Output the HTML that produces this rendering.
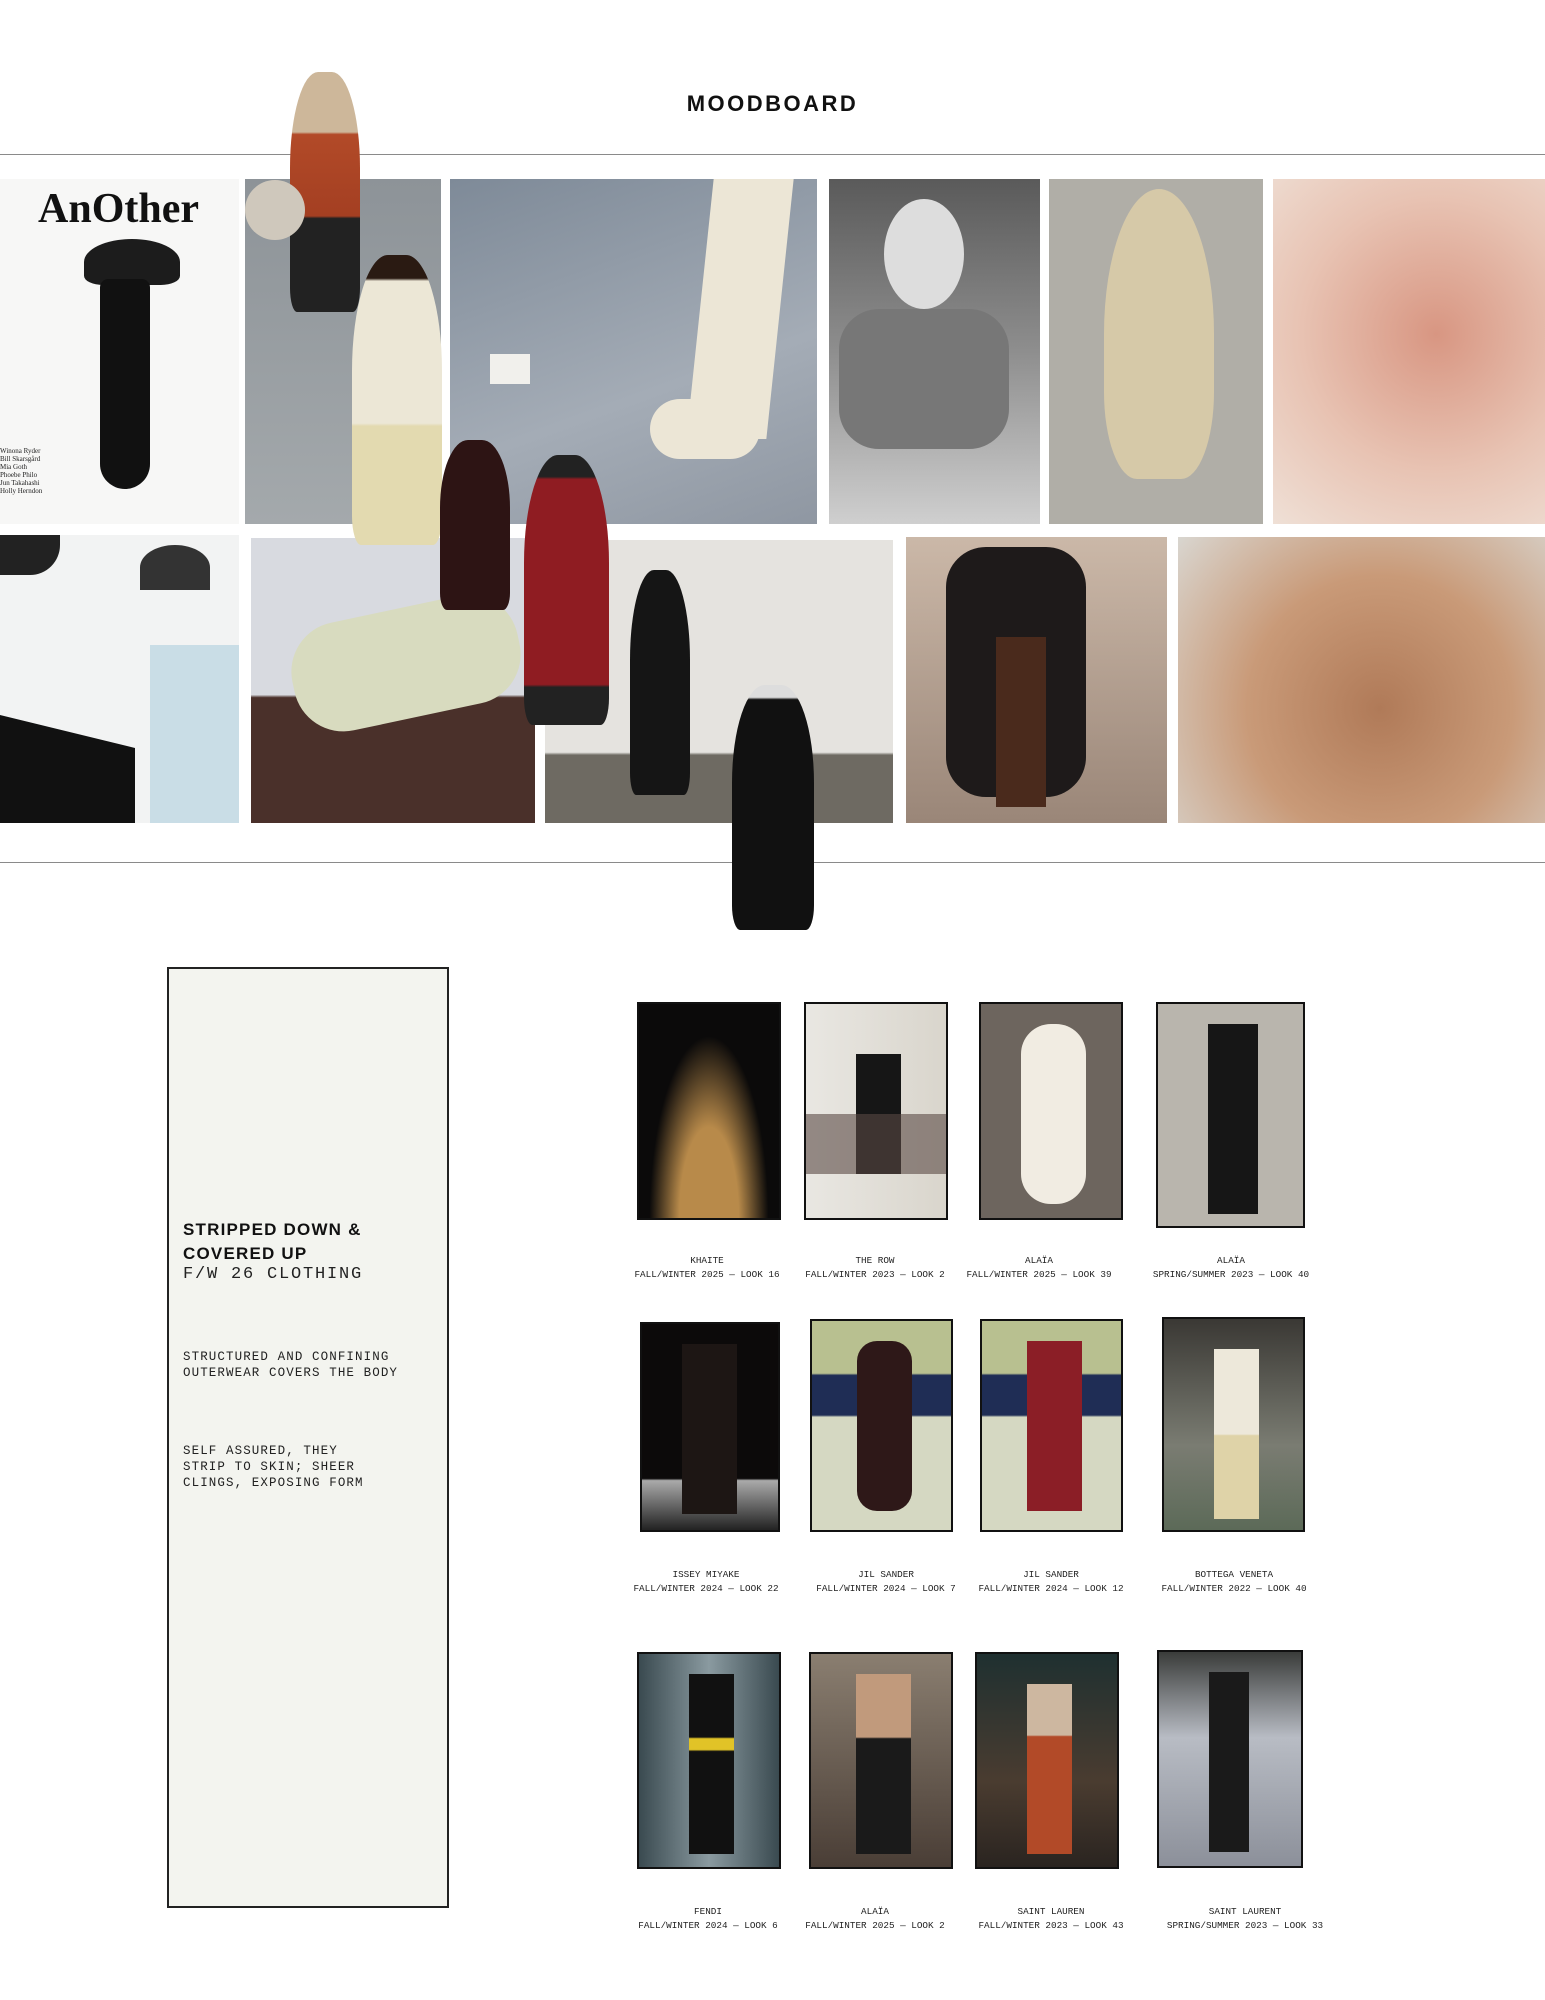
<!DOCTYPE html>
<html><head><meta charset="utf-8"><style>
body{margin:0;background:#fff;width:1545px;height:2000px;position:relative;overflow:hidden;font-family:"Liberation Sans",sans-serif}
.a{position:absolute}
.hl{position:absolute;left:0;width:1545px;height:1px;background:#8a8a8a}
.im{position:absolute;overflow:hidden}
.th{position:absolute;border:2px solid #111;box-sizing:border-box;overflow:hidden}
.cap{position:absolute;font-family:"Liberation Mono",monospace;font-size:9.3px;color:#222;text-align:center;line-height:14px;white-space:nowrap;transform:translateX(-50%)}
.mono{font-family:"Liberation Mono",monospace;color:#222;letter-spacing:1.1px}
.fig{position:absolute;border-radius:40% 40% 10% 10%}
</style></head><body>
<div class="a" style="left:0;width:1545px;top:91px;text-align:center;font-weight:bold;font-size:22px;letter-spacing:2.5px;color:#111">MOODBOARD</div>
<div class="hl" style="top:154px"></div>
<div class="hl" style="top:862px"></div>

<!-- top row -->
<div class="im" style="left:0;top:179px;width:239px;height:345px;background:#f7f7f6">
 <div class="a" style="left:38px;top:6px;font-family:'Liberation Serif',serif;font-size:42px;font-weight:bold;color:#111">AnOther</div>
 <div class="a" style="left:84px;top:60px;width:96px;height:46px;background:#1c1c1c;border-radius:50% 50% 20% 20%"></div>
 <div class="a" style="left:100px;top:100px;width:50px;height:210px;background:#111;border-radius:10px 10px 30px 30px"></div>
 <div class="a mono" style="left:0;top:268px;font-family:'Liberation Serif',serif;font-size:7px;line-height:8px;letter-spacing:0">Winona Ryder<br>Bill Skarsgård<br>Mia Goth<br>Phoebe Philo<br>Jun Takahashi<br>Holly Herndon</div>
</div>
<div class="im" style="left:245px;top:179px;width:196px;height:345px;background:linear-gradient(#8d9398,#a4a9ac)"></div>
<div class="im" style="left:450px;top:179px;width:367px;height:345px;background:linear-gradient(160deg,#7e8a98,#a4acb6 60%,#8f97a2)">
 <div class="a" style="left:250px;top:0;width:80px;height:260px;background:#ece6d6;transform:skewX(-6deg)"></div>
 <div class="a" style="left:200px;top:220px;width:110px;height:60px;background:#ece6d6;border-radius:30px"></div>
 <div class="a" style="left:40px;top:175px;width:40px;height:30px;background:#f1f0ec"></div>
</div>
<div class="im" style="left:829px;top:179px;width:211px;height:345px;background:linear-gradient(#5a5a5a,#8e8e8e 50%,#cfcfcf)">
 <div class="a" style="left:55px;top:20px;width:80px;height:110px;background:#ddd;border-radius:50%"></div>
 <div class="a" style="left:10px;top:130px;width:170px;height:140px;background:#777;border-radius:40px"></div>
</div>
<div class="im" style="left:1049px;top:179px;width:214px;height:345px;background:#b0aea7">
 <div class="a" style="left:55px;top:10px;width:110px;height:290px;background:#d6c9a8;border-radius:50% 50% 30% 30%"></div>
</div>
<div class="im" style="left:1273px;top:179px;width:272px;height:345px;background:radial-gradient(circle at 60% 45%,#d89682,#e8c3b3 55%,#efe0d6)"></div>

<!-- second row -->
<div class="im" style="left:0;top:535px;width:239px;height:288px;background:#f2f3f3">
 <div class="a" style="left:0;top:180px;width:135px;height:110px;background:#111;clip-path:polygon(0 0,100% 30%,100% 100%,0 100%)"></div>
 <div class="a" style="left:150px;top:110px;width:89px;height:178px;background:#c9dde6"></div>
 <div class="a" style="left:0;top:0;width:60px;height:40px;background:#222;border-radius:0 0 30px 0"></div>
 <div class="a" style="left:140px;top:10px;width:70px;height:45px;background:#333;border-radius:50% 50% 0 0"></div>
</div>
<div class="im" style="left:251px;top:538px;width:284px;height:285px;background:linear-gradient(#d8dae0 55%,#4a302a 56%)">
 <div class="a" style="left:40px;top:70px;width:230px;height:110px;background:#d8dbbf;border-radius:50px;transform:rotate(-12deg)"></div>
</div>
<div class="im" style="left:545px;top:540px;width:348px;height:283px;background:linear-gradient(#e5e3df 75%,#6e6a62 76%)"></div>
<div class="im" style="left:906px;top:537px;width:261px;height:286px;background:linear-gradient(#cbb8a8,#9a8678)">
 <div class="a" style="left:40px;top:10px;width:140px;height:250px;background:#1e1a1a;border-radius:40px"></div>
 <div class="a" style="left:90px;top:100px;width:50px;height:170px;background:#4a2a1c"></div>
</div>
<div class="im" style="left:1178px;top:537px;width:367px;height:286px;background:radial-gradient(circle at 55% 60%,#b07a58,#c99a78 50%,#d9d6d0)"></div>

<!-- cutout figures -->
<div class="fig" style="left:290px;top:72px;width:70px;height:240px;background:linear-gradient(#cdb79a 25%,#b24a28 26%,#a43f22 60%,#222 61%)"></div>
<div class="fig" style="left:245px;top:180px;width:60px;height:60px;background:#cfc8bc;border-radius:50%"></div>
<div class="fig" style="left:352px;top:255px;width:90px;height:290px;background:linear-gradient(#2a1a12 8%,#ece7d6 9%,#ece7d6 58%,#e3dab0 59%)"></div>
<div class="fig" style="left:440px;top:440px;width:70px;height:170px;background:#2d1414"></div>
<div class="fig" style="left:524px;top:455px;width:85px;height:270px;background:linear-gradient(#222 8%,#8f1c22 9%,#8f1c22 85%,#222 86%)"></div>
<div class="fig" style="left:732px;top:685px;width:82px;height:245px;background:linear-gradient(#ddd 5%,#111 6%)"></div>
<div class="fig" style="left:630px;top:570px;width:60px;height:225px;background:#151515"></div>

<!-- text box -->
<div class="a" style="left:167px;top:967px;width:282px;height:941px;background:#f3f4ef;border:2px solid #222;box-sizing:border-box"></div>
<div class="a" style="left:183px;top:1218px;font-weight:bold;font-size:17px;letter-spacing:1.2px;line-height:24px;color:#111">STRIPPED DOWN &amp;<br>COVERED UP</div>
<div class="a mono" style="left:183px;top:1265px;font-size:17px;letter-spacing:1.8px">F/W 26 CLOTHING</div>
<div class="a mono" style="left:183px;top:1349px;font-size:12.5px;line-height:16px">STRUCTURED AND CONFINING<br>OUTERWEAR COVERS THE BODY</div>
<div class="a mono" style="left:183px;top:1443px;font-size:12.5px;line-height:16px">SELF ASSURED, THEY<br>STRIP TO SKIN; SHEER<br>CLINGS, EXPOSING FORM</div>

<!-- grid row 1 -->
<div class="th" style="left:637px;top:1002px;width:144px;height:218px;background:radial-gradient(ellipse at 50% 100%,#b88a4a 30%,#0b0a0a 60%)"></div>
<div class="th" style="left:804px;top:1002px;width:144px;height:218px;background:linear-gradient(90deg,#e9e7e2,#d9d5cc)"><div class="a" style="left:50px;top:50px;width:45px;height:120px;background:#161616"></div><div class="a" style="left:0;top:110px;width:140px;height:60px;background:#5a4a44;opacity:.6"></div></div>
<div class="th" style="left:979px;top:1002px;width:144px;height:218px;background:#6d655e"><div class="a" style="left:40px;top:20px;width:65px;height:180px;background:#f1ece2;border-radius:30px"></div></div>
<div class="th" style="left:1156px;top:1002px;width:149px;height:226px;background:#b9b5ad"><div class="a" style="left:50px;top:20px;width:50px;height:190px;background:#161616"></div></div>
<div class="cap" style="left:707px;top:1254px">KHAITE<br>FALL/WINTER 2025 — LOOK 16</div>
<div class="cap" style="left:875px;top:1254px">THE ROW<br>FALL/WINTER 2023 — LOOK 2</div>
<div class="cap" style="left:1039px;top:1254px">ALAÏA<br>FALL/WINTER 2025 — LOOK 39</div>
<div class="cap" style="left:1231px;top:1254px">ALAÏA<br>SPRING/SUMMER 2023 — LOOK 40</div>

<!-- grid row 2 -->
<div class="th" style="left:640px;top:1322px;width:140px;height:210px;background:linear-gradient(#0c0a0a 75%,#aaa 76%,#222)"><div class="a" style="left:40px;top:20px;width:55px;height:170px;background:#1d1614"></div></div>
<div class="th" style="left:810px;top:1319px;width:143px;height:213px;background:linear-gradient(#b8c090 25%,#1f2d55 26%,#1f2d55 45%,#d5d8c2 46%)"><div class="a" style="left:45px;top:20px;width:55px;height:170px;background:#2e1818;border-radius:20px"></div></div>
<div class="th" style="left:980px;top:1319px;width:143px;height:213px;background:linear-gradient(#b8c090 25%,#1f2d55 26%,#1f2d55 45%,#d5d8c2 46%)"><div class="a" style="left:45px;top:20px;width:55px;height:170px;background:#8b1e26"></div></div>
<div class="th" style="left:1162px;top:1317px;width:143px;height:215px;background:linear-gradient(#3a3834,#7a7c72 60%,#5c6a58)"><div class="a" style="left:50px;top:30px;width:45px;height:170px;background:linear-gradient(#ede8da 50%,#dfd3a8 51%)"></div></div>
<div class="cap" style="left:706px;top:1568px">ISSEY MIYAKE<br>FALL/WINTER 2024 — LOOK 22</div>
<div class="cap" style="left:886px;top:1568px">JIL SANDER<br>FALL/WINTER 2024 — LOOK 7</div>
<div class="cap" style="left:1051px;top:1568px">JIL SANDER<br>FALL/WINTER 2024 — LOOK 12</div>
<div class="cap" style="left:1234px;top:1568px">BOTTEGA VENETA<br>FALL/WINTER 2022 — LOOK 40</div>

<!-- grid row 3 -->
<div class="th" style="left:637px;top:1652px;width:144px;height:217px;background:linear-gradient(90deg,#3a4a50,#8a9aa0 50%,#3a4a50)"><div class="a" style="left:50px;top:20px;width:45px;height:180px;background:linear-gradient(#111 35%,#e1c327 36%,#e1c327 42%,#111 43%)"></div></div>
<div class="th" style="left:809px;top:1652px;width:144px;height:217px;background:linear-gradient(#8a7e70,#4a3e36)"><div class="a" style="left:45px;top:20px;width:55px;height:180px;background:linear-gradient(#c19a7c 35%,#1a1a1a 36%)"></div></div>
<div class="th" style="left:975px;top:1652px;width:144px;height:217px;background:linear-gradient(#1f3030,#4a3c30 60%,#2a2420)"><div class="a" style="left:50px;top:30px;width:45px;height:170px;background:linear-gradient(#cdb7a0 30%,#b24a28 31%)"></div></div>
<div class="th" style="left:1157px;top:1650px;width:146px;height:218px;background:linear-gradient(#3a3c3a,#b8bcc4 40%,#8c909a)"><div class="a" style="left:50px;top:20px;width:40px;height:180px;background:#1a1a1a"></div></div>
<div class="cap" style="left:708px;top:1905px">FENDI<br>FALL/WINTER 2024 — LOOK 6</div>
<div class="cap" style="left:875px;top:1905px">ALAÏA<br>FALL/WINTER 2025 — LOOK 2</div>
<div class="cap" style="left:1051px;top:1905px">SAINT LAUREN<br>FALL/WINTER 2023 — LOOK 43</div>
<div class="cap" style="left:1245px;top:1905px">SAINT LAURENT<br>SPRING/SUMMER 2023 — LOOK 33</div>
</body></html>
